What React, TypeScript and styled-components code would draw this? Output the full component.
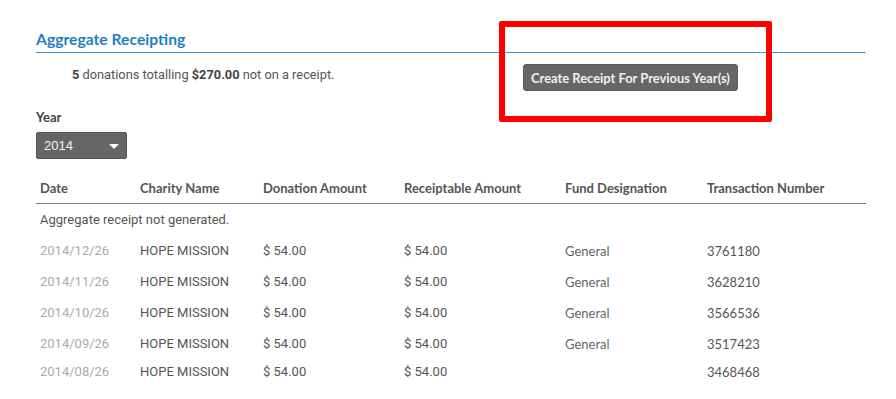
import styled, { createGlobalStyle } from 'styled-components';

const GlobalStyle = createGlobalStyle`
  html, body {
    margin: 0;
    padding: 0;
    background: #ffffff;
  }
  body {
    font-family: Roboto, "Liberation Sans", sans-serif;
    color: #555;
  }
`;

type Donation = {
  date: string;
  charity: string;
  amount: string;
  receiptable: string;
  fund: string;
  transaction: string;
};

const donations: Donation[] = [
  { date: '2014/12/26', charity: 'HOPE MISSION', amount: '$ 54.00', receiptable: '$ 54.00', fund: 'General', transaction: '3761180' },
  { date: '2014/11/26', charity: 'HOPE MISSION', amount: '$ 54.00', receiptable: '$ 54.00', fund: 'General', transaction: '3628210' },
  { date: '2014/10/26', charity: 'HOPE MISSION', amount: '$ 54.00', receiptable: '$ 54.00', fund: 'General', transaction: '3566536' },
  { date: '2014/09/26', charity: 'HOPE MISSION', amount: '$ 54.00', receiptable: '$ 54.00', fund: 'General', transaction: '3517423' },
  { date: '2014/08/26', charity: 'HOPE MISSION', amount: '$ 54.00', receiptable: '$ 54.00', fund: '', transaction: '3468468' },
];

const columns = [
  { label: 'Date', width: 100 },
  { label: 'Charity Name', width: 123 },
  { label: 'Donation Amount', width: 141 },
  { label: 'Receiptable Amount', width: 161 },
  { label: 'Fund Designation', width: 142 },
  { label: 'Transaction Number', width: 163 },
];

const App = () => {
  return (
    <>
      <GlobalStyle />
      <Page>
        <Heading>Aggregate Receipting</Heading>
        <SummaryRow>
          <Summary>
            <strong>5</strong> donations totalling <strong>$270.00</strong> not on a receipt.
          </Summary>
          <ButtonSlot>
            <PrimaryButton>Create Receipt For Previous Year(s)</PrimaryButton>
            <Highlight />
          </ButtonSlot>
        </SummaryRow>

        <FieldLabel>Year</FieldLabel>
        <YearSelect>
          <span>2014</span>
          <Caret />
        </YearSelect>

        <Table>
          <colgroup>
            {columns.map((c) => (
              <col key={c.label} style={{ width: c.width }} />
            ))}
          </colgroup>
          <thead>
            <tr>
              {columns.map((c) => (
                <HeaderCell key={c.label}>{c.label}</HeaderCell>
              ))}
            </tr>
          </thead>
          <tbody>
            <NoticeRow>
              <td colSpan={6}>Aggregate receipt not generated.</td>
            </NoticeRow>
            {donations.map((d, i) => (
              <DataRow key={d.transaction} $short={i === donations.length - 1}>
                <DateCell>{d.date}</DateCell>
                <TextCell>{d.charity}</TextCell>
                <TextCell>{d.amount}</TextCell>
                <TextCell>{d.receiptable}</TextCell>
                <FundCell>{d.fund}</FundCell>
                <NumberCell>{d.transaction}</NumberCell>
              </DataRow>
            ))}
          </tbody>
        </Table>
      </Page>
    </>
  );
};

const Page = styled.div`
  width: 830px;
  padding: 29px 0 0 36px;
`;

const Heading = styled.h2`
  margin: 0;
  font-family: Lato, "Liberation Sans", sans-serif;
  font-weight: 700;
  font-size: 15.7px;
  line-height: 20px;
  color: #1f7dbf;
  padding-bottom: 3px;
  border-bottom: 1px solid #3a98d6;
`;

const SummaryRow = styled.div`
  display: flex;
  align-items: flex-start;
  height: 50px;
`;

const Summary = styled.p`
  margin: 14px 0 0 36px;
  width: 451px;
  font-family: Roboto, "Liberation Sans", sans-serif;
  font-size: 12.8px;
  line-height: 15px;
  color: #555;

  strong {
    font-weight: 700;
    color: #444;
  }
`;

const ButtonSlot = styled.div`
  position: relative;
  margin-top: 11px;
`;

const PrimaryButton = styled.button`
  height: 27px;
  width: 215px;
  padding: 0;
  background: #666666;
  border: 1px solid #5a5a5a;
  border-radius: 3px;
  color: #f2f2f2;
  font-family: Lato, "Liberation Sans", sans-serif;
  font-weight: 700;
  font-size: 12.9px;
  cursor: pointer;
`;

/* red annotation frame drawn over the button */
const Highlight = styled.div`
  position: absolute;
  left: -24px;
  top: -43px;
  width: 261px;
  height: 89px;
  border: 6px solid #ff0000;
  border-radius: 2px;
  pointer-events: none;
`;

const FieldLabel = styled.div`
  margin-top: 6px;
  font-family: Lato, "Liberation Sans", sans-serif;
  font-weight: 700;
  font-size: 13px;
  line-height: 16px;
  color: #444;
`;

const YearSelect = styled.div`
  margin-top: 7px;
  box-sizing: border-box;
  width: 91px;
  height: 27px;
  display: flex;
  align-items: center;
  justify-content: space-between;
  padding: 0 7px 0 7px;
  background: #666666;
  border: 1px solid #555;
  border-radius: 2px;
  color: #f4f4f4;
  font-family: "Liberation Sans", Arial, sans-serif;
  font-size: 13px;
`;

const Caret = styled.span`
  width: 0;
  height: 0;
  border-left: 5px solid transparent;
  border-right: 5px solid transparent;
  border-top: 5px solid #ffffff;
  margin-top: 1px;
`;

const Table = styled.table`
  margin-top: 14px;
  width: 830px;
  table-layout: fixed;
  border-collapse: collapse;
`;

const HeaderCell = styled.th`
  text-align: left;
  padding: 0 0 0 4px;
  height: 30px;
  vertical-align: middle;
  font-family: Lato, "Liberation Sans", sans-serif;
  font-weight: 700;
  font-size: 13px;
  color: #555;
  border-bottom: 1px solid #7a7a7a;
  white-space: nowrap;
`;

const NoticeRow = styled.tr`
  td {
    height: 31px;
    padding: 0 0 0 4px;
    font-family: Roboto, "Liberation Sans", sans-serif;
    font-size: 13px;
    color: #555;
    vertical-align: middle;
  }
`;

const DataRow = styled.tr<{ $short?: boolean }>`
  td {
    height: ${(p) => (p.$short ? 25 : 31)}px;
  }
`;

const Cell = styled.td`
  padding: 0 0 0 4px;
  vertical-align: middle;
  font-size: 13px;
  white-space: nowrap;
`;

const DateCell = styled(Cell)`
  font-family: Roboto, "Liberation Sans", sans-serif;
  color: #aaaaaa;
`;

const TextCell = styled(Cell)`
  font-family: Roboto, "Liberation Sans", sans-serif;
  color: #555;
`;

const FundCell = styled(Cell)`
  font-family: Lato, "Liberation Sans", sans-serif;
  color: #666;
`;

const NumberCell = styled(Cell)`
  font-family: Lato, "Liberation Sans", sans-serif;
  color: #555;
`;

export default App;
